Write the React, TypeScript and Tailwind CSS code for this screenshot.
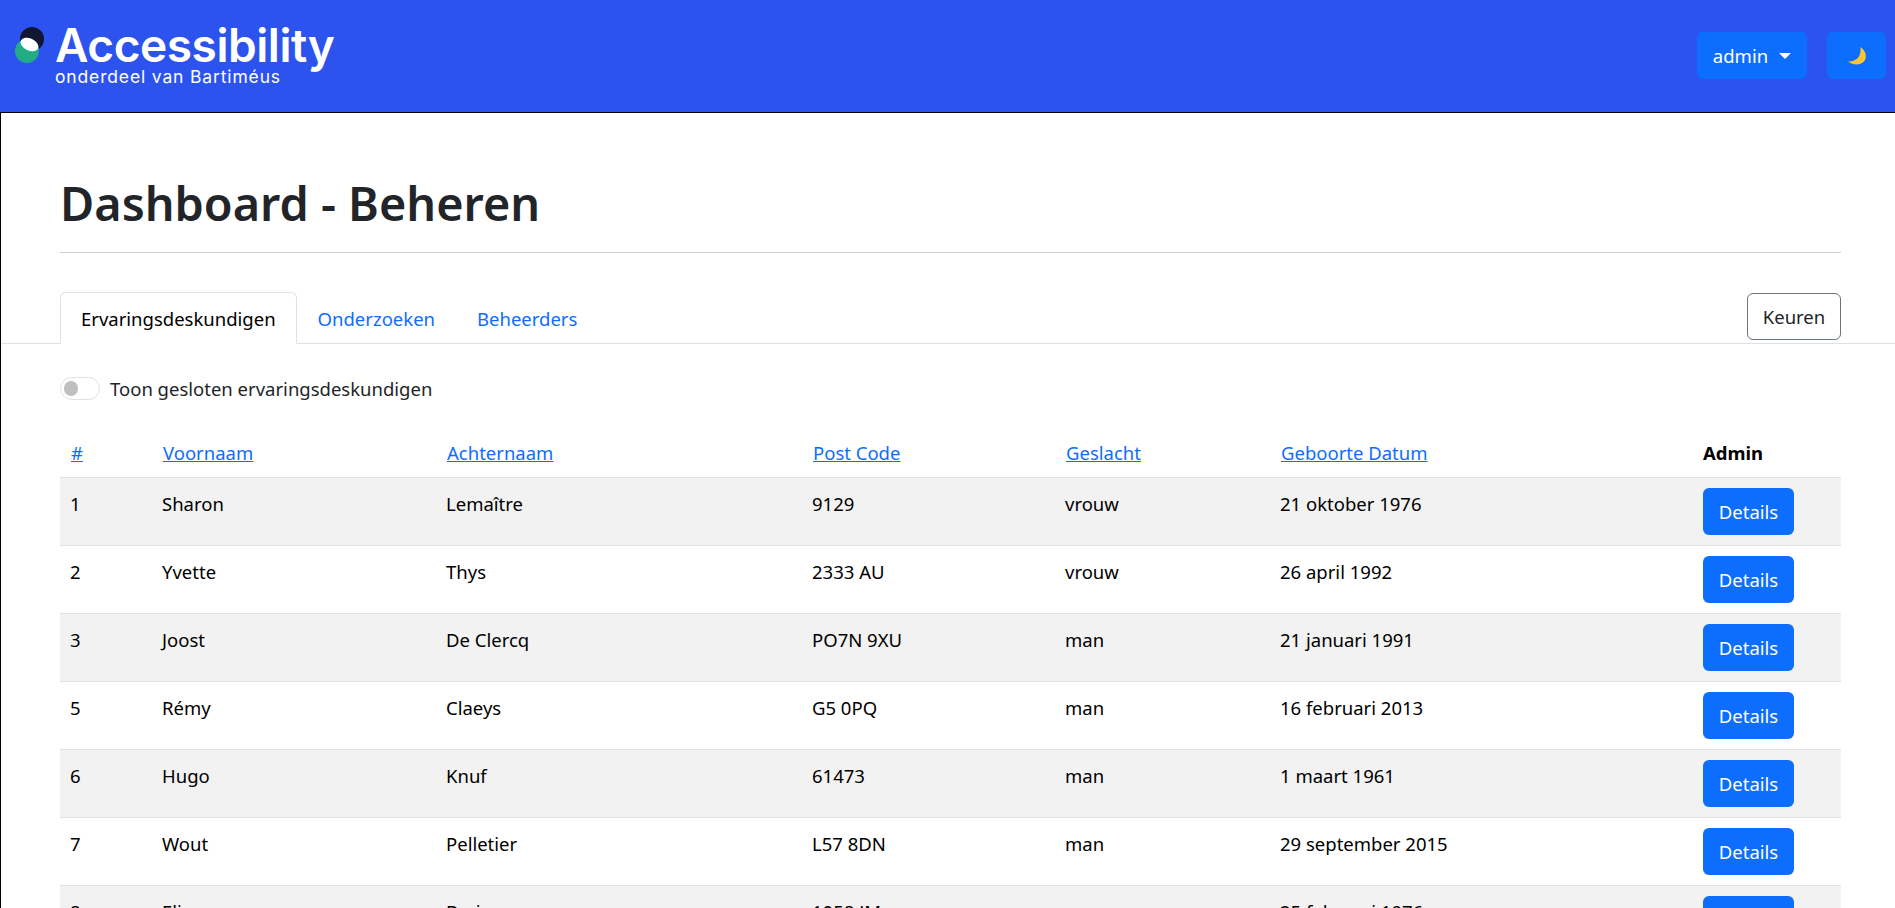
import React from "react";

const rows = [
  ["1", "Sharon", "Lemaître", "9129", "vrouw", "21 oktober 1976"],
  ["2", "Yvette", "Thys", "2333 AU", "vrouw", "26 april 1992"],
  ["3", "Joost", "De Clercq", "PO7N 9XU", "man", "21 januari 1991"],
  ["5", "Rémy", "Claeys", "G5 0PQ", "man", "16 februari 2013"],
  ["6", "Hugo", "Knuf", "61473", "man", "1 maart 1961"],
  ["7", "Wout", "Pelletier", "L57 8DN", "man", "29 september 2015"],
  ["8", "Elise", "Brein", "1058 JM", "vrouw", "25 februari 1976"],
];
const heads = ["#", "Voornaam", "Achternaam", "Post Code", "Geslacht", "Geboorte Datum"];
const widths = ["w-[92px]", "w-[284px]", "w-[366px]", "w-[253px]", "w-[215px]", "w-[422px]", "w-[149px]"];

export default function App() {
  return (
    <div className="h-[908px] overflow-hidden bg-white font-['Noto_Sans',sans-serif] text-[18.5px] text-[#212529]">
      <header className="flex h-[113px] items-start justify-between bg-[#2c53ee] border-b border-black">
        <div className="flex items-start pl-[15px] pt-[27px]">
          <svg width="30" height="36" viewBox="0 0 30 36">
            <circle cx="17" cy="12" r="12" fill="#111633" />
            <circle cx="12" cy="24" r="12" fill="#22ac85" />
            <ellipse cx="14.5" cy="17.5" rx="9.5" ry="6" transform="rotate(25 14.5 17.5)" fill="#ffffff" />
          </svg>
          <div className="ml-[10px] -mt-[4px] flex flex-col text-white font-['Inter',sans-serif]">
            <span className="text-[46px] leading-[44px] font-semibold tracking-[-0.45px]">Accessibility</span>
            <span className="text-[17.5px] leading-[20px] tracking-[0.85px]">onderdeel van Bartiméus</span>
          </div>
        </div>
        <div className="flex items-start pt-[32px] pr-[9px]">
          <button className="flex h-[47px] w-[110px] items-center justify-center rounded-[6px] bg-[#0d6efd] text-white">
            admin
            <span className="ml-[11px] h-0 w-0 border-x-[6px] border-t-[6px] border-x-transparent border-t-white" />
          </button>
          <button className="ml-[20px] flex h-[47px] w-[59px] items-center justify-center rounded-[6px] bg-[#0d6efd]">
            <svg width="20" height="20" viewBox="0 0 20 20">
              <path d="M13.5 1 C19 5 20.5 11 17 15.5 C13 19.5 6 19.5 1 15.5 C6 15.5 10.5 13.5 12.5 9.5 C13.5 7 13.8 4 13.5 1 Z" fill="#fbc531" />
            </svg>
          </button>
        </div>
      </header>

      <main className="border-l border-black pt-[63px] h-[795px] overflow-hidden">
        <div className="ml-[59px] mr-[54px]">
          <h1 className="text-[46.8px] font-semibold leading-[54px] pb-[22px] border-b border-[#ced0d3]">Dashboard - Beheren</h1>
        </div>

        <div className="mt-[40px] flex h-[51px] items-end justify-between border-b border-[#dee2e6] pl-[59px] pr-[54px]">
          <div className="flex">
            <div className="-mb-px flex h-[52px] items-center rounded-t-[6px] border border-b-white border-[#dee2e6] bg-white px-[20px] pt-[2px] text-black">Ervaringsdeskundigen</div>
            <div className="flex h-[51px] items-center px-[21px] pt-[2px] text-[#0d6efd]">Onderzoeken</div>
            <div className="flex h-[51px] items-center px-[21px] pt-[2px] text-[#0d6efd]">Beheerders</div>
          </div>
          <button className="mb-[3px] flex h-[47px] w-[94px] items-center justify-center rounded-[6px] border border-[#6c757d]">Keuren</button>
        </div>

        <div className="mt-[31px] ml-[59px] flex items-center">
          <span className="flex h-[23px] w-[40px] items-center rounded-full border border-[#dee2e6] pl-[3px]">
            <span className="h-[15px] w-[14px] rounded-full bg-[#bfbfbf]" />
          </span>
          <span className="ml-[10px] leading-[27px]">Toon gesloten ervaringsdeskundigen</span>
        </div>

        <table className="ml-[59px] mt-[21px] w-[1781px] table-fixed border-collapse text-black">
          <thead>
            <tr className="h-[54px] border-b border-[#dee2e6]">
              {heads.map((h, i) => (
                <th key={h} className={`${widths[i]} px-[11px] pt-[7px] text-left font-normal`}>
                  <a className="text-[#0d6efd] underline">{h}</a>
                </th>
              ))}
              <th className={`${widths[6]} px-[11px] pt-[7px] text-left font-bold`}>Admin</th>
            </tr>
          </thead>
          <tbody>
            {rows.map((r, i) => (
              <tr key={r[0]} className={`h-[68px] border-b border-[#dee2e6] ${i % 2 === 0 ? "bg-[#f2f2f2]" : "bg-white"}`}>
                {r.map((c, j) => (
                  <td key={j} className="px-[10px] pb-[15px] align-middle">{c}</td>
                ))}
                <td className="px-[11px] align-middle">
                  <button className="h-[47px] w-[91px] rounded-[6px] bg-[#0d6efd] pt-[2px] text-white">Details</button>
                </td>
              </tr>
            ))}
          </tbody>
        </table>
      </main>
    </div>
  );
}
